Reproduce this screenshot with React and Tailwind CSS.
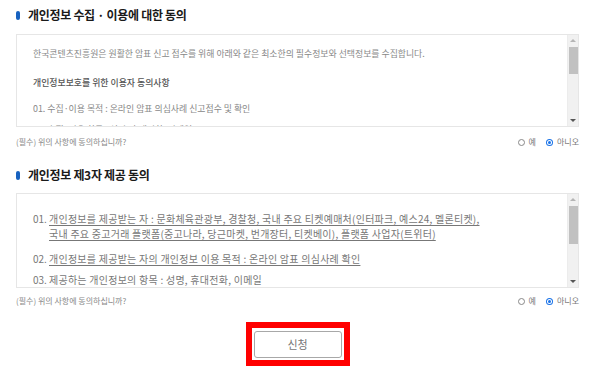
import React from 'react';

const font = { fontFamily: '"Noto Sans CJK KR", "Noto Sans", sans-serif' };

function SectionTitle({ children }) {
  return (
    <div className="flex items-center gap-[8px] h-[20px]">
      <span className="w-[4px] h-[9px] rounded-full bg-[#1762c0]" />
      <h2 className="text-[12px] font-bold text-[#1a1a1a] leading-[20px] tracking-[-0.3px]">{children}</h2>
    </div>
  );
}

function FakeScrollbar({ thumbTop, thumbHeight }) {
  return (
    <div className="w-[11px] shrink-0 bg-[#f1f1f1] border-l border-[#ececec] flex flex-col items-center">
      <span className="mt-[4px] w-0 h-0 border-l-[3px] border-r-[3px] border-b-[3px] border-l-transparent border-r-transparent border-b-[#b5b5b5]" />
      <div className="w-[9px] bg-[#c1c1c1]" style={{ marginTop: thumbTop, height: thumbHeight }} />
      <span className="mt-auto mb-[4px] w-0 h-0 border-l-[3px] border-r-[3px] border-t-[3px] border-l-transparent border-r-transparent border-t-[#555]" />
    </div>
  );
}

function AgreeRow() {
  return (
    <div className="flex items-center justify-between h-[16px] text-[8px] text-[#888]">
      <span>(필수) 위의 사항에 동의하십니까?</span>
      <div className="flex items-center text-[8px] text-[#777]">
        <label className="flex items-center gap-[4px]">
          <span className="w-[7px] h-[7px] rounded-full border border-[#888] bg-white" />
          <span>예</span>
        </label>
        <label className="flex items-center gap-[4px] ml-[10px]">
          <span className="w-[7px] h-[7px] rounded-full bg-[#1a73e8] flex items-center justify-center">
            <span className="w-[3px] h-[3px] rounded-full bg-[#1a73e8] ring-1 ring-white" />
          </span>
          <span>아니오</span>
        </label>
      </div>
    </div>
  );
}

export default function App() {
  return (
    <div className="w-[600px] h-[368px] bg-white overflow-hidden pl-[16px] pr-[21px] pt-[5px]" style={font}>
      <SectionTitle>개인정보 수집 · 이용에 대한 동의</SectionTitle>

      <div className="mt-[9px] h-[93px] border border-[#e6e6e6] flex overflow-hidden">
        <div className="flex-1 overflow-hidden pl-[16px] pt-[13px] text-[8.9px] leading-[12px] text-[#888]">
          <p>한국콘텐츠진흥원은 원활한 암표 신고 접수를 위해 아래와 같은 최소한의 필수정보와 선택정보를 수집합니다.</p>
          <p className="mt-[17px] text-[#555] font-medium">개인정보보호를 위한 이용자 동의사항</p>
          <p className="mt-[14px]">01. 수집·이용 목적 : 온라인 암표 의심사례 신고접수 및 확인</p>
          <p className="mt-[9px]">02. 수집·이용 항목 : 성명, 휴대전화, 이메일</p>
        </div>
        <FakeScrollbar thumbTop={5} thumbHeight={27} />
      </div>

      <div className="mt-[7px]">
        <AgreeRow />
      </div>

      <div className="mt-[15px]">
        <SectionTitle>개인정보 제3자 제공 동의</SectionTitle>
      </div>

      <div className="mt-[8px] h-[95px] border border-[#e6e6e6] flex overflow-hidden">
        <div className="flex-1 overflow-hidden pl-[16px] pt-[17px] text-[10px] leading-[15px] tracking-[0.25px] text-[#777]">
          <div className="flex">
            <span className="w-[16px] shrink-0 tracking-normal">01.</span>
            <span className="underline underline-offset-2">개인정보를 제공받는 자 : 문화체육관광부, 경찰청, 국내 주요 티켓예매처(인터파크, 예스24, 멜론티켓),<br />국내 주요 중고거래 플랫폼(중고나라, 당근마켓, 번개장터, 티켓베이), 플랫폼 사업자(트위터)</span>
          </div>
          <div className="flex mt-[10px]">
            <span className="w-[16px] shrink-0 tracking-normal">02.</span>
            <span className="underline underline-offset-2">개인정보를 제공받는 자의 개인정보 이용 목적 : 온라인 암표 의심사례 확인</span>
          </div>
          <div className="flex mt-[6px]">
            <span className="w-[16px] shrink-0 tracking-normal">03.</span>
            <span>제공하는 개인정보의 항목 : 성명, 휴대전화, 이메일</span>
          </div>
        </div>
        <FakeScrollbar thumbTop={5} thumbHeight={38} />
      </div>

      <div className="mt-[5px]">
        <AgreeRow />
      </div>

      <div className="flex justify-center mt-[13px]">
        <div className="border-[6px] border-[#ff0000] p-[2px]">
          <button className="w-[88px] h-[27px] rounded-[3px] border border-[#a8a8a8] bg-white text-[11px] text-[#777]">신청</button>
        </div>
      </div>
    </div>
  );
}
